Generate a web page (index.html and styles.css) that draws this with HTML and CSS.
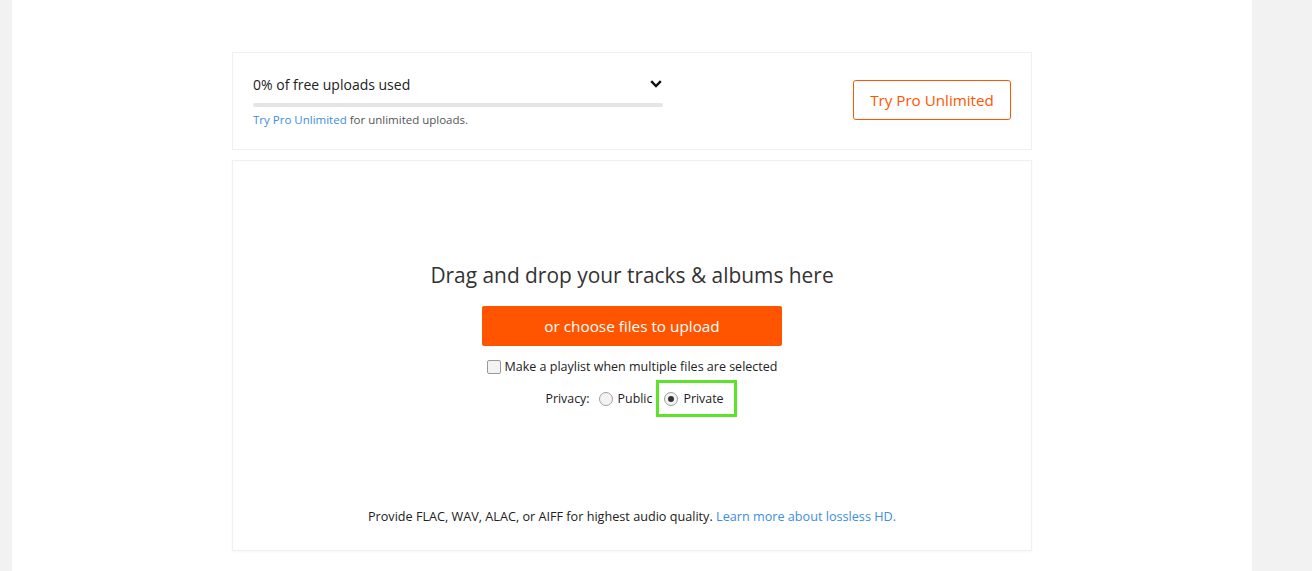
FILE: index.html
```html
<!DOCTYPE html>
<html>
<head>
<meta charset="utf-8">
<link rel="stylesheet" href="styles.css">
</head>
<body>
<div class="page">
  <div class="column">
    <section class="quota">
      <div class="quota-left">
        <div class="quota-head">
          <span class="quota-title">0% of free uploads used</span>
          <svg class="chevron" width="12" height="8" viewBox="0 0 12 8"><path d="M1.2 1.2 L6 6 L10.8 1.2" fill="none" stroke="#111" stroke-width="2.4"/></svg>
        </div>
        <div class="bar"><div class="bar-fill" style="width:0%"></div></div>
        <div class="quota-note"><a class="link">Try Pro Unlimited</a> for unlimited uploads.</div>
      </div>
      <a class="pro-btn">Try Pro Unlimited</a>
    </section>
    <section class="upload">
      <h1 class="drop-title">Drag and drop your tracks &amp; albums here</h1>
      <button class="choose-btn">or choose files to upload</button>
      <label class="check-row"><span class="checkbox"></span>Make a playlist when multiple files are selected</label>
      <div class="privacy">
        <span class="privacy-label">Privacy:</span>
        <label class="radio-opt"><span class="radio"></span>Public</label>
        <label class="radio-opt highlighted"><span class="radio checked"></span>Private</label>
      </div>
      <p class="lossless">Provide FLAC, WAV, ALAC, or AIFF for highest audio quality. <a class="link">Learn more about lossless HD.</a></p>
    </section>
  </div>
</div>
</body>
</html>
```

FILE: styles.css
```css
html, body {
  margin: 0;
  padding: 0;
  background: #f2f2f2;
  font-family: "Open Sans", "Noto Sans", sans-serif;
  color: #333;
}
.page {
  margin-left: 12px;
  width: 1240px;
  height: 571px;
  background: #fff;
  padding-top: 52px;
  box-sizing: border-box;
}
.column {
  width: 800px;
  margin-left: 220px;
  display: flex;
  flex-direction: column;
  gap: 10px;
}
.quota {
  height: 98px;
  box-sizing: border-box;
  border: 1px solid #f0f0f0;
  display: flex;
  justify-content: space-between;
  align-items: center;
  padding: 0 20px;
}
.quota-left {
  width: 410px;
  display: flex;
  flex-direction: column;
  padding-top: 0;
}
.quota-head {
  display: flex;
  justify-content: space-between;
  align-items: center;
  height: 20px;
}
.quota-title {
  font-size: 14px;
  color: #222;
}
.chevron {
  margin-right: 1px;
}
.bar {
  margin-top: 9px;
  height: 4px;
  border-radius: 2px;
  background: #e5e5e5;
}
.bar-fill {
  height: 4px;
  background: #f50;
}
.quota-note {
  margin-top: 5px;
  font-size: 11.5px;
  color: #555;
  line-height: 16px;
}
.link {
  color: #3b8ee0;
  text-decoration: none;
}
.pro-btn {
  width: 158px;
  height: 40px;
  box-sizing: border-box;
  border: 1px solid #f50;
  border-radius: 3px;
  color: #f50;
  font-size: 15.2px;
  display: flex;
  align-items: center;
  justify-content: center;
  margin-top: -2px;
}
.upload {
  height: 391px;
  box-sizing: border-box;
  border: 1px solid #f0f0f0;
  box-shadow: 0 1px 2px rgba(0,0,0,0.04);
  display: flex;
  flex-direction: column;
  align-items: center;
  padding-top: 99px;
}
.drop-title {
  margin: 0;
  font-weight: normal;
  font-size: 20.9px;
  line-height: 30px;
  color: #333;
}
.choose-btn {
  margin-top: 16px;
  width: 300px;
  height: 40px;
  border: none;
  border-radius: 2px;
  background: #f50;
  color: #fff;
  font-family: inherit;
  font-size: 15.3px;
  padding: 0;
}
.check-row {
  margin-top: 12px;
  display: flex;
  align-items: center;
  font-size: 12.5px;
  color: #222;
  height: 17px;
}
.checkbox {
  width: 12px;
  height: 12px;
  border: 1px solid #999;
  border-radius: 2px;
  background: #f3f3f3;
  margin-right: 4px;
}
.privacy {
  margin-top: 5px;
  display: flex;
  align-items: center;
  font-size: 12.4px;
  color: #222;
  margin-left: 18px;
}
.privacy-label {
  margin-right: 9px;
}
.radio-opt {
  display: flex;
  align-items: center;
  height: 31px;
}
.radio {
  width: 12px;
  height: 12px;
  border: 1px solid #a0a0a0;
  border-radius: 50%;
  background: #f3f3f3;
  margin-right: 5px;
  display: flex;
  align-items: center;
  justify-content: center;
}
.radio.checked::after {
  content: "";
  width: 6px;
  height: 6px;
  border-radius: 50%;
  background: #333;
}
.radio-opt.highlighted {
  border: 3px solid #5be42a;
  padding: 0 10px 0 5px;
  margin-left: 4px;
}
.lossless {
  margin: 91px 0 0;
  font-size: 12.65px;
  line-height: 17px;
  color: #222;
}
```
